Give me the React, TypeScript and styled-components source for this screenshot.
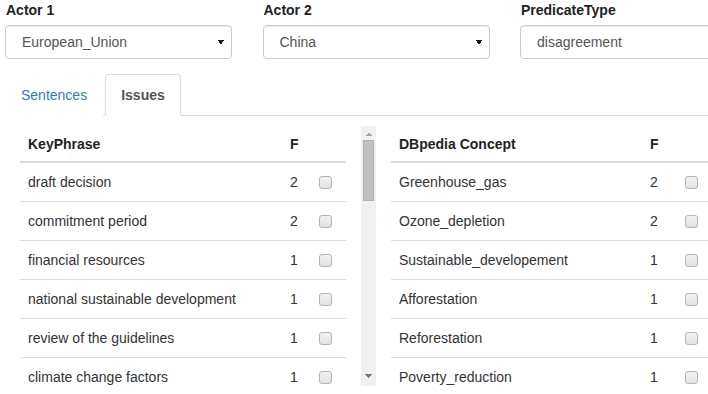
import styled, { createGlobalStyle } from "styled-components";

interface Issue {
  name: string;
  freq: number;
}

const keyPhrases: Issue[] = [
  { name: "draft decision", freq: 2 },
  { name: "commitment period", freq: 2 },
  { name: "financial resources", freq: 1 },
  { name: "national sustainable development", freq: 1 },
  { name: "review of the guidelines", freq: 1 },
  { name: "climate change factors", freq: 1 },
];

const concepts: Issue[] = [
  { name: "Greenhouse_gas", freq: 2 },
  { name: "Ozone_depletion", freq: 2 },
  { name: "Sustainable_developement", freq: 1 },
  { name: "Afforestation", freq: 1 },
  { name: "Reforestation", freq: 1 },
  { name: "Poverty_reduction", freq: 1 },
];

const GlobalStyle = createGlobalStyle`
  html, body {
    margin: 0;
    padding: 0;
    overflow: hidden;
    background: #fff;
  }
  body {
    font-family: "Liberation Sans", Arial, sans-serif;
    font-size: 14px;
    line-height: 20px;
    color: #333;
  }
  * {
    box-sizing: border-box;
  }
`;

// small triangles drawn with two half gradients
const arrowDown = (c: string, x: number, y: number, w: number, h: number) =>
  `linear-gradient(to bottom left, ${c} 50%, transparent 50%) ${x}px ${y}px / ${w}px ${h}px no-repeat,
   linear-gradient(to bottom right, ${c} 50%, transparent 50%) ${x + w}px ${y}px / ${w}px ${h}px no-repeat`;

const arrowUp = (c: string, x: number, y: number, w: number, h: number) =>
  `linear-gradient(to top left, ${c} 50%, transparent 50%) ${x}px ${y}px / ${w}px ${h}px no-repeat,
   linear-gradient(to top right, ${c} 50%, transparent 50%) ${x + w}px ${y}px / ${w}px ${h}px no-repeat`;

const Page = styled.div`
  width: 760px;
  padding-left: 5px;
`;

const FilterRow = styled.div`
  display: grid;
  grid-template-columns: repeat(3, 227px);
  column-gap: 30.5px;
`;

const Field = styled.div`
  display: flex;
  flex-direction: column;
`;

const Label = styled.label`
  font-weight: bold;
  margin: 0 0 5px 1px;
  line-height: 20px;
  color: #222;
`;

const Select = styled.select`
  appearance: none;
  height: 34px;
  width: 100%;
  padding: 6px 24px 6px 16px;
  font-family: inherit;
  font-size: 14px;
  color: #555;
  background: ${arrowDown("#1a1a1a", 212, 14, 3, 5)}, #fff;
  border: 1px solid #ccc;
  border-radius: 4px;
  box-shadow: inset 0 1px 1px rgba(0, 0, 0, 0.075);
`;

const Tabs = styled.ul`
  display: flex;
  list-style: none;
  margin: 15px 0 0;
  padding: 0;
  border-bottom: 1px solid #ddd;
`;

const Tab = styled.li<{ $active?: boolean }>`
  margin: 0 2px -1px 0;
  padding: 10px 15px;
  border: 1px solid ${(p) => (p.$active ? "#ddd" : "transparent")};
  border-bottom-color: transparent;
  border-radius: 4px 4px 0 0;
  background: #fff;
  color: ${(p) => (p.$active ? "#555" : "#337ab7")};
  font-weight: ${(p) => (p.$active ? "bold" : "normal")};
  cursor: pointer;
`;

const Panels = styled.div`
  display: grid;
  grid-template-columns: 371px 371px;
  margin-top: 10px;
`;

const Panel = styled.div`
  display: flex;
  height: 260px;
`;

const PanelBody = styled.div`
  flex: 1;
  overflow: hidden;
  padding: 0 15px;
`;

const ScrollTrack = styled.div`
  width: 15px;
  display: flex;
  flex-direction: column;
  background: #f1f1f1;
`;

const ScrollButton = styled.div<{ $up?: boolean }>`
  height: 14px;
  background: ${(p) =>
    p.$up ? arrowUp("#a3a3a3", 4, 6, 4, 4) : arrowDown("#7a7a7a", 4, 2, 4, 4)};
`;

const ScrollThumb = styled.div`
  height: 61px;
  margin: 0 2px;
  background: #c1c1c1;
  box-shadow: inset 0 0 0 1px #b3b3b3;
`;

const Table = styled.table`
  width: 326px;
  border-collapse: collapse;
  table-layout: fixed;
`;

const Th = styled.th<{ $w?: number }>`
  width: ${(p) => (p.$w ? `${p.$w}px` : "auto")};
  padding: 8px 8px 7px;
  text-align: left;
  vertical-align: bottom;
  font-weight: bold;
  border-bottom: 2px solid #ddd;
  line-height: 20px;
  color: #222;
`;

const Td = styled.td`
  padding: 8px;
  border-top: 1px solid #ddd;
  line-height: 22px;
  white-space: nowrap;
  vertical-align: middle;
`;

const Check = styled.input`
  appearance: none;
  display: block;
  width: 13px;
  height: 13px;
  margin: 0;
  border: 1px solid #b5b5b5;
  border-radius: 3px;
  background: linear-gradient(#f2f2f2, #e2e2e2);
`;

const IssueTable = ({
  title,
  rows,
  widths,
}: {
  title: string;
  rows: Issue[];
  widths: [number, number];
}) => (
  <Panel>
    <PanelBody>
      <Table>
        <thead>
          <tr>
            <Th $w={widths[0]}>{title}</Th>
            <Th $w={widths[1]}>F</Th>
            <Th></Th>
          </tr>
        </thead>
        <tbody>
          {rows.map((r) => (
            <tr key={r.name}>
              <Td>{r.name}</Td>
              <Td>{r.freq}</Td>
              <Td>
                <Check type="checkbox" />
              </Td>
            </tr>
          ))}
        </tbody>
      </Table>
    </PanelBody>
    <ScrollTrack>
      <ScrollButton $up />
      <ScrollThumb />
      <div style={{ flex: 1 }} />
      <ScrollButton />
    </ScrollTrack>
  </Panel>
);

const App = () => {
  return (
    <Page>
      <GlobalStyle />
      <FilterRow>
        <Field>
          <Label>Actor 1</Label>
          <Select defaultValue="European_Union">
            <option>European_Union</option>
          </Select>
        </Field>
        <Field>
          <Label>Actor 2</Label>
          <Select defaultValue="China">
            <option>China</option>
          </Select>
        </Field>
        <Field>
          <Label>PredicateType</Label>
          <Select defaultValue="disagreement">
            <option>disagreement</option>
          </Select>
        </Field>
      </FilterRow>
      <Tabs>
        <Tab>Sentences</Tab>
        <Tab $active>Issues</Tab>
      </Tabs>
      <Panels>
        <IssueTable title="KeyPhrase" rows={keyPhrases} widths={[262, 29]} />
        <IssueTable title="DBpedia Concept" rows={concepts} widths={[251, 35]} />
      </Panels>
    </Page>
  );
};

export default App;
